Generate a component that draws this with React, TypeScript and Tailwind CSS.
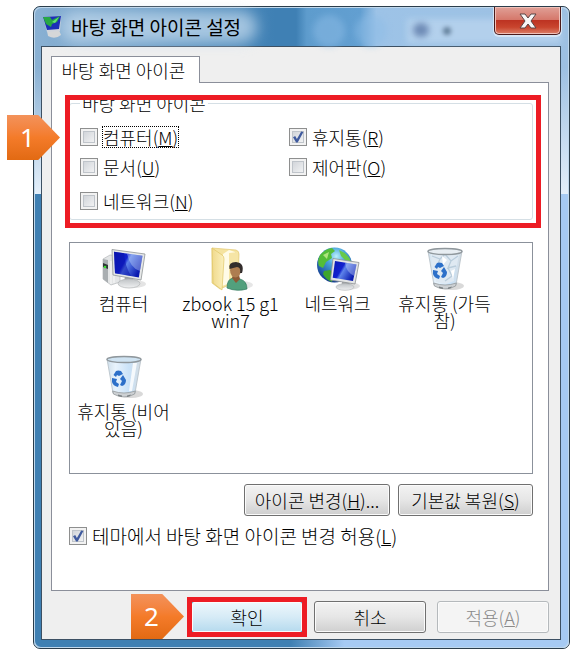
import React, { useState } from 'react';

interface CheckFieldProps {
  id: string;
  label: string;
  hotkey: string;
  focused?: boolean;
  large?: boolean;
  defaultChecked?: boolean;
}

const CheckField: React.FC<CheckFieldProps> = ({ id, label, hotkey, focused, large, defaultChecked = false }) => {
  const [checked, setChecked] = useState(defaultChecked);

  return (
    <div className="flex items-center gap-[5px]">
      <span className="relative block size-[18px] shrink-0">
        <input
          id={id}
          type="checkbox"
          checked={checked}
          onChange={(e) => setChecked(e.target.checked)}
          className="block size-[18px] appearance-none border border-[#8e8f8f] bg-linear-to-br from-[#c9cdd3] to-[#fafafa] shadow-[inset_0_0_0_2px_#f2f2f2,inset_0_0_0_3px_#bfc4ca]"
        />
        {checked && (
          <svg viewBox="0 0 18 18" className="pointer-events-none absolute inset-0 size-[18px]">
            <path d="M4 9.2 L6.2 8 L7.9 11 L12.2 3.4 L14.4 3.9 L8.7 14.6 L7.1 14.6 Z" fill="#3f5a9e" />
          </svg>
        )}
      </span>
      <label
        htmlFor={id}
        className={`${large ? 'text-[19px]' : 'text-[18px]'} leading-5 ${focused ? 'outline-1 outline-dotted outline-black' : ''}`}
      >
        {label}(<u>{hotkey}</u>)
      </label>
    </div>
  );
};

interface PushButtonProps {
  children: React.ReactNode;
  className?: string;
  disabled?: boolean;
  primary?: boolean;
}

const PushButton: React.FC<PushButtonProps> = ({ children, className = '', disabled, primary }) => {
  let look = 'border-[#707070] bg-linear-to-b from-[#f3f3f3] via-[#e6e6e6] to-[#cfcfcf] text-black';
  if (primary) look = 'border-[#2c9fc9] bg-linear-to-b from-[#eef7fc] via-[#d6ebf6] to-[#b5daee] text-black';
  if (disabled) look = 'border-[#b5b9bc] bg-[#f4f4f4] text-[#8a8a8a]';
  return (
    <button
      type="button"
      disabled={disabled}
      className={`h-8 rounded-[3px] border text-[18px] leading-5 whitespace-nowrap shadow-[inset_0_0_0_1px_#fbfbfb] ${look} ${className}`}
    >
      {children}
    </button>
  );
};

const Callout: React.FC<{ step: number; className: string }> = ({ step, className }) => (
  <div
    className={`absolute z-10 flex h-[45px] w-[53px] items-center bg-linear-to-b from-[#f3925a] via-[#f47b29] to-[#e26a12] pl-[13px] font-['Noto_Sans'] text-[26px] font-normal text-white [clip-path:polygon(0_0,59%_0,100%_50%,59%_100%,0_100%)] ${className}`}
  >
    {step}
  </div>
);

const Screen = ({ id }: { id: string }) => (
  <>
    <linearGradient id={id} x1="0" y1="0" x2="1" y2="0.5">
      <stop offset="0" stopColor="#0a17b4" />
      <stop offset="0.45" stopColor="#1222cf" />
      <stop offset="0.55" stopColor="#5d83ea" />
      <stop offset="1" stopColor="#0b1bb0" />
    </linearGradient>
    <linearGradient id={`${id}-stand`} x1="0" y1="0" x2="0" y2="1">
      <stop offset="0" stopColor="#bfc3c6" />
      <stop offset="1" stopColor="#f0f1f2" />
    </linearGradient>
  </>
);

const ComputerIcon = () => (
  <svg viewBox="0 0 44 44" className="size-11">
    <defs><Screen id="pc" /></defs>
    <ellipse cx="31" cy="37" rx="13" ry="4" fill="#d9d9d9" opacity=".7" />
    <path d="M1 12 L8 8 L18 9 L18 35 L9 38 L1 32Z" fill="#e3e5e6" stroke="#b4b8ba" strokeWidth=".7" />
    <path d="M1 12 L6 13 L6 36 L1 32Z" fill="#a9aeb1" />
    <path d="M1 16 L6 18 L6 22 L1 20Z" fill="#303738" />
    <circle cx="3" cy="20" r="1.3" fill="#3be034" />
    <path d="M9 14 V37 M12 13 V36" stroke="#fafafa" strokeWidth="1" />
    <path d="M23 29 L31 31 L31 37 L22 36Z" fill="#9fa4a7" />
    <ellipse cx="27" cy="36.5" rx="11" ry="4.5" fill="url(#pc-stand)" stroke="#b3b6b8" strokeWidth=".7" />
    <path d="M10 2.5 L43 7 L39 33 L11 28Z" fill="#e6e8e8" stroke="#8f9496" strokeWidth=".8" />
    <path d="M12 4.7 L40.5 8.8 L36.8 30.5 L13 26.2Z" fill="url(#pc)" />
    <path d="M25 6.6 L40.5 8.8 L37.8 24 Q28 21 25 6.6Z" fill="#c5d6fb" opacity=".4" />
    <path d="M12 4.7 L22 6.2 Q23 19 29 29 L13 26.2Z" fill="#0712a8" opacity=".5" />
  </svg>
);

const UserFolderIcon = () => (
  <svg viewBox="0 0 44 44" className="size-11">
    <defs>
      <linearGradient id="folder" x1="0" y1="0" x2="1" y2="0">
        <stop offset="0" stopColor="#f0d98c" />
        <stop offset="1" stopColor="#fbf0bd" />
      </linearGradient>
    </defs>
    <ellipse cx="32" cy="38" rx="12" ry="4" fill="#d6d6d6" opacity=".6" />
    <path d="M3 1 L27 3 Q30 4 30 7 L29 34 L11 42 L3 36Z" fill="#f5e3a0" stroke="#e2c973" strokeWidth=".7" />
    <path d="M14 7 L20 3 L26 5 L27 34 L13 39Z" fill="#fffbe7" />
    <path d="M20 6 L29 5 L29 34 L20 36Z" fill="#f6e5a6" />
    <path d="M3 1 L13 8 Q15 9 15 12 L13 43 L4 36Z" fill="url(#folder)" stroke="#e0c566" strokeWidth=".7" />
    <path d="M18 41 Q18 32 24 31 L31 32 Q38 34 38 42 Q28 45 18 41Z" fill="#52a07d" stroke="#2f795b" strokeWidth=".7" />
    <path d="M23 31 L27 36 L31 32 L30 28 L24 28Z" fill="#8d5a35" />
    <ellipse cx="26.5" cy="23.5" rx="5.4" ry="7" fill="#ae7d50" />
    <path d="M20.5 22 Q19 15 27 15 Q36 16 33 26 L31 26 Q32 20 28 20 Q24 21 20.5 22Z" fill="#332d2c" />
  </svg>
);

const NetworkIcon = () => (
  <svg viewBox="0 0 44 44" className="size-11">
    <defs>
      <Screen id="net" />
      <radialGradient id="globe" cx=".55" cy=".25" r=".75">
        <stop offset="0" stopColor="#b9f0fb" />
        <stop offset=".35" stopColor="#49a5dc" />
        <stop offset="1" stopColor="#123b8f" />
      </radialGradient>
    </defs>
    <ellipse cx="34" cy="39" rx="10" ry="3.5" fill="#d3d3d3" opacity=".7" />
    <circle cx="18.5" cy="18" r="17.5" fill="url(#globe)" />
    <path d="M4 8 Q9 2 16 1 L19 4 L15 7 L16 11 L10 15 L7 21 L3 19 Q1 14 4 8Z" fill="#54bd38" />
    <path d="M8 24 L14 23 L18 27 L16 35 Q9 32 7 27Z" fill="#3ea52c" />
    <path d="M23 3 Q33 7 35 15 L29 13 L25 9Z" fill="#68c94a" />
    <path d="M7 8 L13 5 L11 12Z" fill="#afe47e" />
    <path d="M27 32 L34 34 L33 40 L25 39Z" fill="#a3a7a9" />
    <ellipse cx="29" cy="40" rx="9" ry="3.3" fill="url(#net-stand)" stroke="#b0b3b5" strokeWidth=".6" />
    <path d="M17 11.5 L43 15.5 L39 37 L14.5 33Z" fill="#e3e5e6" stroke="#8d9193" strokeWidth=".8" />
    <path d="M19 14 L40.5 17.5 L37 34 L16.7 30.8Z" fill="url(#net)" />
    <path d="M29 15.8 L40.5 17.5 L38.2 29 Q30 25 29 15.8Z" fill="#c5d6fb" opacity=".4" />
  </svg>
);

const BinIcon = ({ full }: { full?: boolean }) => (
  <svg viewBox="0 0 44 44" className="size-11">
    <defs>
      <linearGradient id={full ? 'bin-full' : 'bin-empty'} x1="0" y1="0" x2="1" y2="0">
        <stop offset="0" stopColor="#cfdfeb" />
        <stop offset=".25" stopColor="#e8f3fc" />
        <stop offset=".65" stopColor="#c9e2f8" />
        <stop offset="1" stopColor="#d4dce2" />
      </linearGradient>
    </defs>
    <ellipse cx="29" cy="39" rx="12" ry="4" fill="#c9c9c9" opacity=".7" />
    <path d="M5 4 L39 4 L33 38 Q22 44 11 38Z" fill={full ? 'url(#bin-full)' : 'url(#bin-empty)'} stroke="#b4bec5" strokeWidth=".8" />
    {full && (
      <>
        <path d="M8 8 L14 3 L20 7 L27 3 L36 8 L34 18 L30 25 L31 34 L23 37 L13 35 L11 24Z" fill="#dfe9f2" />
        <path d="M9 9 L17 12 L22 7 L28 14 L35 9 M17 12 L14 19 M28 14 L25 21 L33 19 M25 21 L29 29 L22 34" fill="none" stroke="#b9ccdb" strokeWidth="1.3" />
        <path d="M19 9 L24 13 L20 18Z M28 24 L32 22 L30 32Z" fill="#fff" />
      </>
    )}
    {!full && <path d="M31 8 L35 8 L30 36 L27 36Z" fill="#fff" opacity=".8" />}
    <ellipse cx="22" cy="4.5" rx="17" ry="3" fill={full ? '#e7edf2' : '#cfe3f2'} stroke="#8f979c" strokeWidth="1.4" />
    <path d="M10.7 36 Q22 40 33.3 36 L32.6 39 Q22 45 11.4 39Z" fill="#cdd1d4" stroke="#8b9194" strokeWidth=".7" />
    <path d="M16 39.5 L20 40.5 L20 42 L16 41Z M25 40.5 L29 39.5 L28 41 L25 42Z" fill="#7b8184" />
    <g fill="#2d70c9">
      <path d="M11.5 20 L14 16 Q16 15 19 16 L21 19 L17 21 L15 20 L14 22Z" />
      <path d="M10 23 L15 24 L14 27 L17 29 L16 32 Q11 31 10 27Z" />
      <path d="M21 20 L24 25 Q24 30 20 31 L18 30 L20 26 L18 24Z" />
    </g>
  </svg>
);

const TitleIcon = () => (
  <svg viewBox="0 0 22 24" className="h-6 w-[22px]">
    <path d="M5 16 L17 15 L19 20 Q13 25 6 21Z" fill="#d5d7d8" />
    <path d="M1 2 L19 1 L18 16 L5 17Z" fill="#cfd4dc" />
    <path d="M1 2 L19 1 L17 14 L5 15Z" fill="#1c2fb8" />
    <path d="M1 2 L8 2 L10 5 L18 1 L15 7 L10 9 L9 12 L4 9Z" fill="#27a844" />
    <path d="M10 7 L17 2 L13 8Z" fill="#66e07b" />
  </svg>
);

const ICONS = [
  { name: '컴퓨터', icon: <ComputerIcon /> },
  { name: 'zbook 15 g1 win7', icon: <UserFolderIcon /> },
  { name: '네트워크', icon: <NetworkIcon /> },
  { name: '휴지통 (가득참)', icon: <BinIcon full /> },
  { name: '휴지통 (비어 있음)', icon: <BinIcon /> },
];

const TitleBar = () => (
  <header className="relative flex h-[39px] items-start gap-[7px] pl-px">
    {/* glass reflections behind the title */}
    <span className="absolute top-2 left-[272px] size-8 rounded-full bg-[#8dbce6] opacity-50 blur-[3px]" />
    <span className="absolute top-2 left-[314px] size-8 rounded-full bg-[#8dbce6] opacity-50 blur-[3px]" />
    <span className="absolute top-3 right-0 left-[366px] h-6 bg-[#bdd7f0] opacity-70 blur-[3px]" />
    <span className="absolute top-4 left-[372px] h-3.5 w-4 rounded-full bg-[#5d7aa8] opacity-80 blur-[3px]" />
    <span className="absolute top-5 left-[402px] size-2 rounded-full bg-[#63809b] blur-[2px]" />
    <span className="absolute top-1 left-5 h-8 w-[196px] rounded-full bg-[#c9def0] opacity-70 blur-[7px]" />
    <span className="relative mt-2"><TitleIcon /></span>
    <h1 className="relative mt-2 text-[19px] leading-6 font-normal">바탕 화면 아이콘 설정</h1>
    <button
      type="button"
      aria-label="닫기"
      className="relative ml-auto flex h-7 w-[67px] items-center justify-center rounded-b-[5px] border border-t-0 border-[#4c1b1b] bg-[linear-gradient(#e0a097,#d5776a_48%,#bd3322_50%,#c9452e_75%,#dc8069)] shadow-[inset_0_0_0_1px_#f0c0b8,0_1px_0_1px_#d5e5f5]"
    >
      <svg viewBox="0 0 18 16" className="h-4 w-[18px]">
        <path d="M1 1 H6 L9 5 L12 1 H17 L12 8 L17 15 H12 L9 11 L6 15 H1 L6 8Z" fill="#f7f7f7" stroke="#5b4545" strokeWidth="1" />
      </svg>
    </button>
  </header>
);

export default function App() {
  return (
    <div className="bg-white pt-1.5 pr-[5px] pb-1.5 pl-[33px] font-['Noto_Sans_CJK_KR',sans-serif] font-light text-black">
      <main className="rounded-[7px] border border-[#2b3d4b] bg-[linear-gradient(transparent_60px,#e4effa_187px),linear-gradient(90deg,#8ab1d3,#3f80b4_45%,#3f80b4_49%,#5e9ccd_51%,#629fd1_61%,#9dc3e7_64%,#9dc0e2)]">
        <div className="rounded-[7px] bg-[linear-gradient(90deg,#3f80b3_48%,#a6caf3_58%)] bg-[length:100%_calc(100%-187px)] bg-bottom bg-no-repeat pr-2 pb-2 pl-[7px] shadow-[inset_0_0_0_1px_#c0d8ec]">
          <TitleBar />
          <div className="border border-[#3c5063] bg-[#efefef] pt-[9px] pr-[11px] pb-1.5 pl-[9px]">
            <div role="tablist" className="flex">
              <button
                type="button"
                role="tab"
                aria-selected="true"
                className="relative -mb-px h-[27px] w-[149px] border border-b-0 border-[#8b8f9a] bg-white pr-1 text-[18px] leading-6 whitespace-nowrap"
              >
                바탕 화면 아이콘
              </button>
            </div>

            <section className="border border-[#8b8f9a] bg-white pt-2.5 pr-[15px] pb-11 pl-[17px]">
              <div className="relative">
                <fieldset className="rounded-[3px] border border-[#d5dfe5] pb-[3px] pl-2.5">
                  <legend className="px-0.5 text-[18px] leading-5">바탕 화면 아이콘</legend>
                  <div className="grid grid-cols-[209px_1fr] pt-[9px]">
                    <div className="grid auto-rows-[30px] items-center">
                      <CheckField id="computer" label="컴퓨터" hotkey="M" focused />
                      <CheckField id="documents" label="문서" hotkey="U" />
                    </div>
                    <div className="grid auto-rows-[30px] items-center">
                      <CheckField id="recycle" label="휴지통" hotkey="R" defaultChecked />
                      <CheckField id="control" label="제어판" hotkey="O" />
                    </div>
                    <div className="mt-1 flex h-[30px] items-center">
                      <CheckField id="network" label="네트워크" hotkey="N" />
                    </div>
                  </div>
                </fieldset>
                <span className="pointer-events-none absolute top-0.5 -right-2 -bottom-2 -left-1 border-[5px] border-[#ed1c24]" />
                <Callout step={1} className="top-[22px] -left-[62px]" />
              </div>

              <ul className="mt-[22px] grid auto-rows-[108px] grid-cols-[repeat(auto-fill,107px)] border border-[#8b919b] pt-1 pb-2.5">
                {ICONS.map((item) => (
                  <li key={item.name} className="flex flex-col items-center gap-1 px-0.5 text-center text-[18px] leading-[17px]">
                    {item.icon}
                    <span>{item.name}</span>
                  </li>
                ))}
              </ul>

              <div className="mt-2.5 mb-2.5 flex justify-end gap-2">
                <PushButton className="w-[146px]">아이콘 변경(<u>H</u>)...</PushButton>
                <PushButton className="w-[135px]">기본값 복원(<u>S</u>)</PushButton>
              </div>
              <CheckField id="themes" label="테마에서 바탕 화면 아이콘 변경 허용" hotkey="L" large defaultChecked />
            </section>

            <footer className="flex justify-end gap-[11px] pt-2.5">
              <div className="relative">
                <PushButton primary className="w-28">확인</PushButton>
                <span className="pointer-events-none absolute -inset-1 border-[5px] border-[#ed1c24]" />
                <Callout step={2} className="-top-[7px] -left-[60px]" />
              </div>
              <PushButton className="w-28">취소</PushButton>
              <PushButton disabled className="w-28">적용(<u>A</u>)</PushButton>
            </footer>
          </div>
        </div>
      </main>
    </div>
  );
}
